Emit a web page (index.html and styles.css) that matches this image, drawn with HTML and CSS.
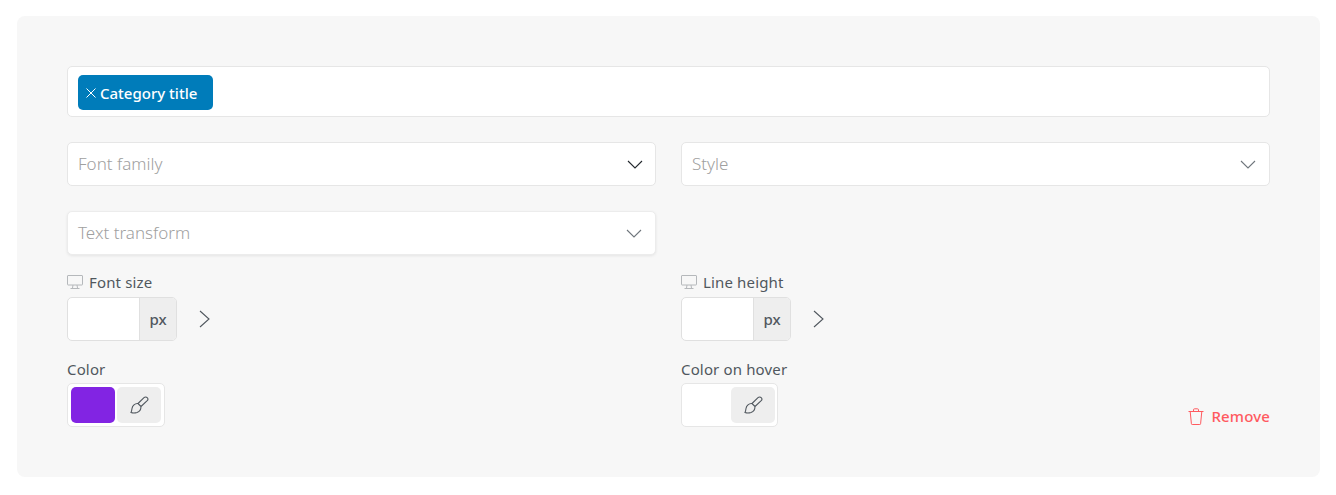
FILE: index.html
```html
<!DOCTYPE html>
<html lang="en">
<head>
<meta charset="utf-8">
<title>Typography settings</title>
<link rel="stylesheet" href="styles.css">
</head>
<body>
<div class="panel">
  <div class="tags-input">
    <span class="tag"><svg class="tag-x" viewBox="0 0 10 10"><path d="M.5.5l9 9M9.500.5l-9 9"/></svg>Category title</span>
  </div>
  <div class="grid">
    <div class="select"><span>Font family</span><svg class="chev dark" viewBox="0 0 16 9"><path d="M1 1l7 7 7-7"/></svg></div>
    <div class="select"><span>Style</span><svg class="chev" viewBox="0 0 16 9"><path d="M1 1l7 7 7-7"/></svg></div>
    <div class="select raised"><span>Text transform</span><svg class="chev" viewBox="0 0 16 9"><path d="M1 1l7 7 7-7"/></svg></div>
  </div>
  <div class="grid sizes">
    <div class="field">
      <div class="label"><svg class="monitor" viewBox="0 0 16 14"><path d="M1 .5h14a.5.5 0 0 1 .5.5v8.500a.5.5 0 0 1-.5.5H1a.5.5 0 0 1-.5-.5V1A.5.5 0 0 1 1 .5zM6 10l-.5 3M10 10l.5 3M3.500 13.500h9"/></svg>Font size</div>
      <div class="size-row">
        <div class="unit-input"><div class="unit-value"></div><div class="unit">px</div></div>
        <svg class="next" viewBox="0 0 11 18"><path d="M1 1l9 8-9 8"/></svg>
      </div>
    </div>
    <div class="field">
      <div class="label"><svg class="monitor" viewBox="0 0 16 14"><path d="M1 .5h14a.5.5 0 0 1 .5.5v8.500a.5.5 0 0 1-.5.5H1a.5.5 0 0 1-.5-.5V1A.5.5 0 0 1 1 .5zM6 10l-.5 3M10 10l.5 3M3.500 13.500h9"/></svg>Line height</div>
      <div class="size-row">
        <div class="unit-input"><div class="unit-value"></div><div class="unit">px</div></div>
        <svg class="next" viewBox="0 0 11 18"><path d="M1 1l9 8-9 8"/></svg>
      </div>
    </div>
  </div>
  <div class="grid colors">
    <div class="field">
      <div class="label plain">Color</div>
      <div class="picker">
        <div class="swatch purple"></div>
        <div class="brush"><svg viewBox="0 0 20 18"><path d="M9 7.500 15 1.700c.9-.9 2.400-.9 3.200 0 .8.800.8 2.200 0 3L12 10.500M9 7.500l3 3c0 2.500-1 5-4 6-2 .6-4.500.5-6 0 .5-1 .8-2.500 1-4 .3-2.500 3-5.500 6-5z"/></svg></div>
      </div>
    </div>
    <div class="field with-remove">
      <div>
        <div class="label plain">Color on hover</div>
        <div class="picker compact">
          <div class="swatch empty"></div>
          <div class="brush"><svg viewBox="0 0 20 18"><path d="M9 7.500 15 1.700c.9-.9 2.400-.9 3.200 0 .8.800.8 2.200 0 3L12 10.500M9 7.500l3 3c0 2.500-1 5-4 6-2 .6-4.500.5-6 0 .5-1 .8-2.500 1-4 .3-2.500 3-5.500 6-5z"/></svg></div>
        </div>
      </div>
      <div class="remove"><svg viewBox="0 0 16 17"><path d="M.5 3.500h15M2.200 3.500l1.200 12.200a.8.8 0 0 0 .8.800h7.600a.8.8 0 0 0 .8-.8l1.200-12.200M5.500 3.500V1.800a1 1 0 0 1 1-1h3a1 1 0 0 1 1 1v1.700"/></svg>Remove</div>
    </div>
  </div>
</div>
</body>
</html>
```

FILE: styles.css
```css
* { box-sizing: border-box; }
html, body { margin: 0; background: #fff; }
body {
  padding: 16px 16px 18px 17px;
  font-family: "Noto Sans", "Open Sans", "Liberation Sans", sans-serif;
  color: #50575e;
}
.panel {
  height: 461px;
  padding: 50px 50px 0;
  background: #f7f7f7;
  border-radius: 8px;
}
.tags-input {
  height: 51px;
  padding: 8px 10px;
  background: #fff;
  border: 1px solid #e6e6e6;
  border-radius: 5px;
  margin-bottom: 25px;
}
.tag {
  display: inline-flex;
  align-items: center;
  gap: 4px;
  height: 35px;
  width: 135px;
  padding: 1px 0 0 8px;
  background: #007cba;
  border-radius: 5px;
  color: #fff;
  font-size: 15px;
  font-weight: 500;
  white-space: nowrap;
}
.tag-x { width: 10px; height: 10px; flex: none; fill: none; stroke: #fff; stroke-width: 1; }
.grid {
  display: grid;
  grid-template-columns: 589px 589px;
  column-gap: 25px;
  row-gap: 25px;
}
.select {
  display: flex;
  align-items: center;
  justify-content: space-between;
  height: 44px;
  padding: 0 13px 2px 10px;
  background: #fff;
  border: 1px solid #e6e6e6;
  border-radius: 5px;
  font-size: 17px;
  font-weight: 300;
  color: #a0a0a0;
}
.select.raised { border-color: #ececec; box-shadow: 0 1px 3px rgba(0, 0, 0, .08); }
.chev { width: 16px; height: 9px; margin-top: 2px; fill: none; stroke: #6f767c; stroke-width: 1.100; }
.chev.dark { margin-right: -1px; stroke: #23282d; }
.sizes { margin-top: 18px; }
.colors { margin-top: 19px; }
.label {
  display: flex;
  align-items: center;
  gap: 6px;
  height: 19px;
  padding-bottom: 2px;
  font-size: 15px;
  letter-spacing: .15px;
  color: #50575e;
}
.label.plain { height: 20px; margin-bottom: 3px; }
.monitor { width: 16px; height: 14px; flex: none; fill: none; stroke: #b5b8bb; stroke-width: 1; }
.size-row { display: flex; align-items: center; margin-top: 5px; }
.unit-input {
  display: flex;
  width: 110px;
  height: 44px;
  background: #fff;
  border: 1px solid #e0e0e0;
  border-radius: 5px;
  overflow: hidden;
}
.unit-value { width: 71px; }
.unit {
  flex: 1;
  display: flex;
  align-items: center;
  justify-content: center;
  background: #eeeeee;
  border-left: 1px solid #e0e0e0;
  font-size: 15px;
  font-weight: 500;
  color: #50575e;
}
.next { width: 11px; height: 18px; margin-left: 22px; fill: none; stroke: #50575e; stroke-width: 1.100; }
.picker {
  display: inline-flex;
  gap: 2px;
  height: 44px;
  padding: 3px;
  background: #fff;
  border: 1px solid #e6e6e6;
  border-radius: 5px;
}
.picker.compact { padding-right: 2px; }
.swatch { width: 44px; height: 36px; border-radius: 5px; }
.swatch.purple { background: #8224e3; }
.swatch.empty { background: #fff; }
.brush {
  display: flex;
  align-items: center;
  justify-content: center;
  width: 44px;
  height: 36px;
  background: #eeeeee;
  border-radius: 5px;
}
.brush svg { width: 20px; height: 18px; fill: none; stroke: #50575e; stroke-width: 1.100; }
.with-remove { display: flex; justify-content: space-between; align-items: flex-end; }
.remove {
  display: flex;
  align-items: center;
  gap: 7px;
  margin-bottom: 2px;
  font-size: 15px;
  font-weight: 500;
  letter-spacing: .15px;
  color: #ff5a5f;
}
.remove svg { width: 16px; height: 17px; fill: none; stroke: #ff5a5f; stroke-width: 1; }
```
